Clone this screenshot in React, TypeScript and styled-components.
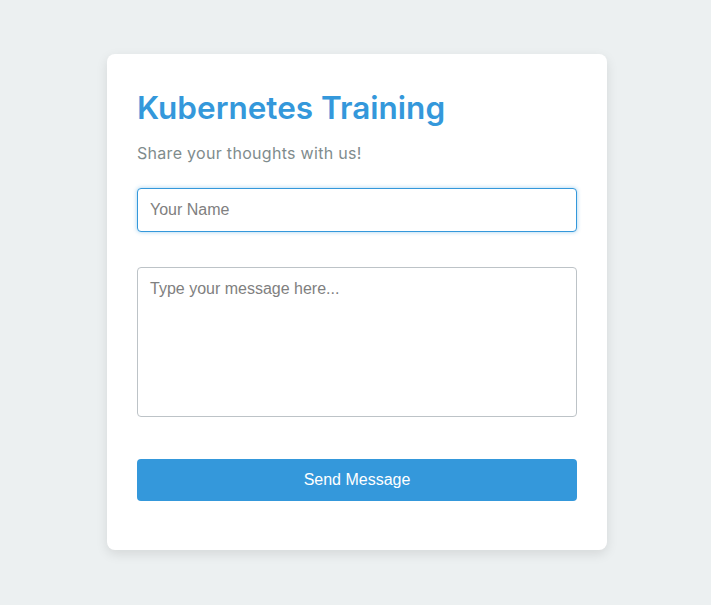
import React from "react";
import styled, { createGlobalStyle } from "styled-components";

const Global = createGlobalStyle`
  html, body { margin: 0; padding: 0; }
  body { background: #ecf0f1; font-family: "Liberation Sans", Arial, sans-serif; }
`;

const Page = styled.div`
  min-height: 605px;
  display: flex;
  align-items: center;
  justify-content: center;
  padding: 0 0 1px 3px;
  box-sizing: border-box;
`;

const Card = styled.form`
  width: 500px;
  box-sizing: border-box;
  background: #ffffff;
  border-radius: 8px;
  box-shadow: 0 4px 12px rgba(0, 0, 0, 0.1);
  padding: 30px 30px 49px;
  display: flex;
  flex-direction: column;
`;

const Title = styled.h1`
  margin: 0;
  font-family: Inter, "Noto Sans", sans-serif;
  font-weight: 600;
  font-size: 31.5px;
  line-height: 46px;
  color: #3498db;
  margin-top: 1px;
`;

const Subtitle = styled.p`
  margin: 10px 0 0;
  font-family: Inter, "Noto Sans", sans-serif;
  font-size: 16px;
  line-height: 24px;
  letter-spacing: 0.3px;
  color: #7f8c8d;
`;

const Input = styled.input`
  margin-top: 23px;
  height: 44px;
  box-sizing: border-box;
  padding: 12px;
  border: 1px solid #3498db;
  border-radius: 4px;
  box-shadow: 0 0 4px rgba(52, 152, 219, 0.45);
  font-family: "Liberation Sans", Arial, sans-serif;
  font-size: 16px;
  outline: none;
  &::placeholder { color: #808080; }
`;

const TextArea = styled.textarea`
  margin-top: 35px;
  height: 150px;
  box-sizing: border-box;
  padding: 12px;
  border: 1px solid #bdc3c7;
  border-radius: 4px;
  resize: none;
  font-family: "Liberation Sans", Arial, sans-serif;
  font-size: 16px;
  line-height: 18px;
  &::placeholder { color: #808080; }
`;

const Button = styled.button`
  margin-top: 42px;
  height: 42px;
  border: none;
  border-radius: 4px;
  background: #3498db;
  color: #ffffff;
  font-family: "Liberation Sans", Arial, sans-serif;
  font-size: 16px;
  cursor: pointer;
`;

export default function App() {
  return (
    <>
      <Global />
      <Page>
        <Card onSubmit={(e) => e.preventDefault()}>
          <Title>Kubernetes Training</Title>
          <Subtitle>Share your thoughts with us!</Subtitle>
          <Input placeholder="Your Name" autoFocus />
          <TextArea placeholder="Type your message here..." />
          <Button type="submit">Send Message</Button>
        </Card>
      </Page>
    </>
  );
}
